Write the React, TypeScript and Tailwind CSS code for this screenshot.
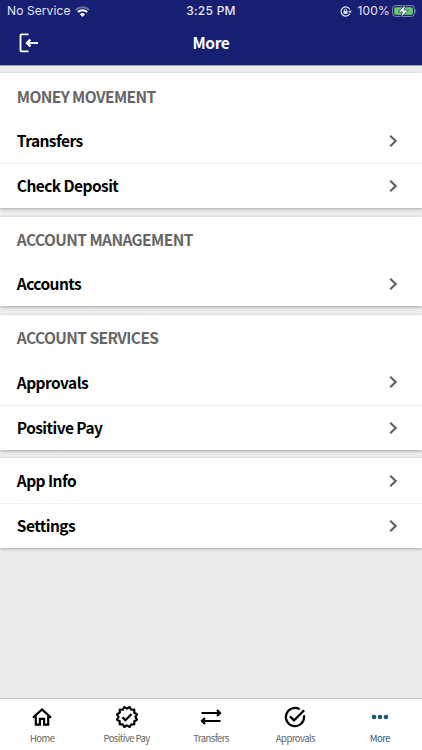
import type { ReactNode } from "react";

const sections: { title?: string; items: string[] }[] = [
  { title: "MONEY MOVEMENT", items: ["Transfers", "Check Deposit"] },
  { title: "ACCOUNT MANAGEMENT", items: ["Accounts"] },
  { title: "ACCOUNT SERVICES", items: ["Approvals", "Positive Pay"] },
  { items: ["App Info", "Settings"] },
];

// Twelve-pointed badge outline, alternating between outer and inner radius.
const badgePoints = Array.from({ length: 24 }, (_, i) => {
  const radius = i % 2 === 0 ? 10.3 : 8.4;
  const angle = (i * Math.PI) / 12 + Math.PI / 12;
  return `${(12 + radius * Math.sin(angle)).toFixed(2)},${(12 - radius * Math.cos(angle)).toFixed(2)}`;
}).join(" ");

function Chevron() {
  return (
    <svg className="h-[14px] w-[9px]" viewBox="0 0 9 14" fill="none" stroke="#5f5f5f" strokeWidth="2.1">
      <path d="M1.2 1.7 6.7 7 1.2 12.3" />
    </svg>
  );
}

function StatusBar() {
  return (
    <div className="grid h-[22px] grid-cols-3 items-center font-['Inter','Liberation_Sans',sans-serif] text-[12px] leading-none text-[#e4e5f5]">
      <div className="flex items-center gap-[4px] pl-[7px]">
        <span className="tracking-[0.1px]">No Service</span>
        <svg className="h-[11px] w-[15px]" viewBox="0 0 15 11" fill="none">
          <path d="M.8 3.9a9.5 9.5 0 0 1 13.4 0" stroke="#6d72ab" strokeWidth="2" />
          <path d="M2.9 6.1a6.5 6.5 0 0 1 9.2 0" stroke="#fff" strokeWidth="2.1" />
          <path d="M7.5 10.9 4.9 8.3a3.7 3.7 0 0 1 5.2 0z" fill="#fff" />
        </svg>
      </div>
      <div className="text-center font-medium tracking-[0.25px]">3:25 PM</div>
      <div className="flex items-center justify-end pr-[5px]">
        <svg className="mr-[5px] h-[11px] w-[12px]" viewBox="0 0 12 11" fill="none" stroke="#e4e5f5">
          <path d="M9.7 3.2A4.6 4.6 0 1 0 9.7 7.8" strokeWidth="1.2" />
          <path d="M8.3 4.8h3.5L10 7.2z" fill="#e4e5f5" stroke="none" />
          <path d="M3.5 4.9h4.1v3H3.5z" fill="#e4e5f5" stroke="none" />
          <path d="M4.4 5V4a1.2 1.2 0 0 1 2.3 0v1" strokeWidth=".9" />
        </svg>
        <span className="tracking-[0.2px]">100%</span>
        <svg className="ml-[2px] h-[14px] w-[25px]" viewBox="0 0 25 14">
          <rect x=".6" y="1.6" width="21.8" height="10.8" rx="3" fill="none" stroke="#878bb8" />
          <rect x="2.2" y="3.2" width="18.6" height="7.6" rx="1.6" fill="#68cf68" />
          <path d="M23.3 5.2v3.6q1-.5 1-1.8t-1-1.8" fill="#878bb8" />
          <path d="M13.6.7 6 7.9h4.4L8.9 13.3l7.7-7.2h-4.4z" fill="#fff" stroke="#17206f" strokeWidth=".7" />
        </svg>
      </div>
    </div>
  );
}

function Tab({ label, active, children }: { label: string; active?: boolean; children: ReactNode }) {
  return (
    <div className={"flex flex-1 flex-col items-center " + (active ? "text-[#1f527c]" : "text-black")}>
      <div className="flex h-[24px] items-center justify-center">{children}</div>
      <span className={"mt-[2px] text-[9.5px] leading-[14px] tracking-[-0.55px] whitespace-nowrap " + (active ? "text-[#1f527c]" : "text-[#666]")}>
        {label}
      </span>
    </div>
  );
}

export default function App() {
  return (
    <div className="flex h-[750px] w-[422px] flex-col overflow-hidden bg-[#ececec] font-['Noto_Sans_CJK_SC',sans-serif]">
      <header className="h-[66px] shrink-0 border-b border-[#9da0c4] bg-[#171f73]">
        <StatusBar />
        <div className="grid h-[42px] grid-cols-3 items-center">
          <svg className="ml-[19px] h-[20px] w-[20px]" viewBox="0 0 20 20" fill="none" stroke="#fff" strokeWidth="1.9">
            <path d="M9.5 1.4H2.8q-1.3 0-1.3 1.3v14.4q0 1.3 1.3 1.3h6.7" />
            <path d="M19 10H8.2" />
            <path d="M11.4 6.6 8 10l3.4 3.4" strokeWidth="2.3" />
          </svg>
          <h1 className="text-center text-[15.5px] font-bold tracking-[-0.4px] text-white">More</h1>
        </div>
      </header>

      <main className="flex flex-1 flex-col gap-[8.6px] pt-[7.4px]">
        {sections.map((section) => (
          <section key={section.items[0]} className="bg-white shadow-[0_1px_3px_rgba(0,0,0,0.3)]">
            {section.title && (
              <h2 className="flex h-[44.9px] items-center pt-[0.8px] pl-[16.8px] text-[15.5px] font-bold tracking-[-0.58px] text-[#666]">
                {section.title}
              </h2>
            )}
            {section.items.map((item, i) => (
              <div
                key={item}
                className={"flex h-[44.9px] items-center justify-between pr-[24px] pl-[16.8px] " + (i > 0 ? "border-t border-[#eee]" : "")}
              >
                <span className="pb-[0.4px] text-[15.5px] font-bold tracking-[-0.56px] text-black">{item}</span>
                <Chevron />
              </div>
            ))}
          </section>
        ))}
      </main>

      <nav className="flex h-[52px] shrink-0 border-t border-[#c6c6c6] bg-white pt-[6px]">
        <Tab label="Home">
          <svg className="h-[24px] w-[24px]" viewBox="0 0 24 24" fill="none" stroke="currentColor" strokeWidth="2.2">
            <path d="M3 12.6 12 4.4l9 8.2M5.8 10.5v9.2h4.1v-5.9h4.2v5.9h4.1v-9.2" />
          </svg>
        </Tab>
        <Tab label="Positive Pay">
          <svg className="h-[24px] w-[24px]" viewBox="0 0 24 24" fill="none" stroke="currentColor" strokeWidth="2.2">
            <polygon points={badgePoints} strokeLinejoin="round" />
            <path d="m7.4 12.2 3 3 6.1-6.2" />
          </svg>
        </Tab>
        <Tab label="Transfers">
          <svg className="h-[18px] w-[22px]" viewBox="0 0 22 18" fill="none" stroke="currentColor" strokeWidth="2.2">
            <path d="M1.5 5H20M17 1.9 20 5l-3 3.1M20.5 13H2M5 9.9 2 13l3 3.1" />
          </svg>
        </Tab>
        <Tab label="Approvals">
          <svg className="h-[24px] w-[24px]" viewBox="0 0 24 24" fill="none" stroke="currentColor" strokeWidth="2.2">
            <path d="M16.6 4.2A9.1 9.1 0 1 0 21.1 12q0-.9-.2-1.8" />
            <path d="m7 11.4 4 4L21.2 5.2" />
          </svg>
        </Tab>
        <Tab label="More" active>
          <svg className="h-[6px] w-[18px]" viewBox="0 0 18 6" fill="currentColor">
            <circle cx="3" cy="3" r="2.3" />
            <circle cx="9" cy="3" r="2.3" />
            <circle cx="15" cy="3" r="2.3" />
          </svg>
        </Tab>
      </nav>
    </div>
  );
}
